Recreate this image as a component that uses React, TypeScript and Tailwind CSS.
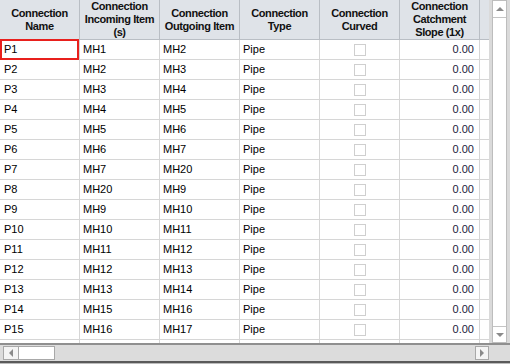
import { Fragment } from "react";

const columns = [
  ["Connection", "Name"],
  ["Connection", "Incoming Item", "(s)"],
  ["Connection", "Outgoing Item"],
  ["Connection", "Type"],
  ["Connection", "Curved"],
  ["Connection", "Catchment", "Slope (1x)"],
];

const rows = [
  ["P1", "MH1", "MH2"],
  ["P2", "MH2", "MH3"],
  ["P3", "MH3", "MH4"],
  ["P4", "MH4", "MH5"],
  ["P5", "MH5", "MH6"],
  ["P6", "MH6", "MH7"],
  ["P7", "MH7", "MH20"],
  ["P8", "MH20", "MH9"],
  ["P9", "MH9", "MH10"],
  ["P10", "MH10", "MH11"],
  ["P11", "MH11", "MH12"],
  ["P12", "MH12", "MH13"],
  ["P13", "MH13", "MH14"],
  ["P14", "MH15", "MH16"],
  ["P15", "MH16", "MH17"],
  ["P16", "MH17", "MH18"],
];

const cell = "h-5 border-r border-b border-[#d6d6d6] bg-white flex items-center";

function Arrow({ dir }: { dir: "up" | "down" | "left" | "right" }) {
  const pts = {
    up: "1,6 5,2 9,6",
    down: "1,2 5,6 9,2",
    left: "6,1 2,5 6,9",
    right: "2,1 6,5 2,9",
  }[dir];
  const size = dir === "up" || dir === "down" ? { w: 10, h: 8 } : { w: 8, h: 10 };
  return (
    <svg width={size.w} height={size.h} viewBox={`0 0 ${size.w} ${size.h}`}>
      <polygon points={pts} fill="#8a8a8a" />
    </svg>
  );
}

export default function App() {
  return (
    <div
      className="w-[510px] h-[364px] bg-[#e3e3e3] overflow-hidden text-[11px] text-black"
      style={{ fontFamily: '"Liberation Sans", Arial, sans-serif' }}
    >
      <div className="flex h-[343px]">
        <div className="w-[489px] h-[343px] overflow-hidden bg-white">
          <div className="grid grid-cols-[repeat(6,80px)_9px]">
            {columns.map((lines, i) => (
              <div
                key={i}
                className="h-10 border-r border-b border-[#b9bec4] bg-[#dfe3e8] flex flex-col items-center justify-center font-bold leading-[13px] tracking-[-0.4px] text-[#111]"
              >
                {lines.map((l) => (
                  <span key={l}>{l}</span>
                ))}
              </div>
            ))}
            <div className="h-10 border-b border-[#b9bec4] bg-[#dfe3e8]" />
            {rows.map(([name, inc, out], r) => (
              <Fragment key={name}>
                <div className={`${cell} pl-1 relative`}>
                  {name}
                  {r === 0 && (
                    <div className="absolute left-0 top-[-1px] w-[79px] h-[21px] border-2 border-[#e8201d]" />
                  )}
                </div>
                <div className={`${cell} pl-[3px]`}>{inc}</div>
                <div className={`${cell} pl-[3px]`}>{out}</div>
                <div className={`${cell} pl-[3px]`}>Pipe</div>
                <div className={`${cell} justify-center`}>
                  <div className="w-3 h-3 border border-[#cfcfcf] bg-white" />
                </div>
                <div className={`${cell} justify-end pr-[5px] text-[#1b1b3a]`}>0.00</div>
                <div className="h-5 border-b border-[#d6d6d6] bg-white" />
              </Fragment>
            ))}
          </div>
        </div>
        <div className="w-[21px] h-[343px] flex flex-col pl-[3px] pr-[3px] bg-[#dadada]">
          <div className="flex-1 flex flex-col border border-[#bdbdbd] bg-[#f0f0f0]">
            <div className="h-[17px] border-b border-[#c4c4c4] bg-white flex items-center justify-center">
              <Arrow dir="up" />
            </div>
            <div className="flex-1 bg-white" />
            <div className="h-[16px] border-t border-[#c4c4c4] bg-white flex items-center justify-center">
              <Arrow dir="down" />
            </div>
          </div>
        </div>
      </div>
      <div className="h-[18px] flex border-t-2 border-[#8f8f8f] bg-[#dcdcdc]">
        <div className="w-[489px] flex items-stretch pl-[3px] py-[1px]">
          <div className="w-4 border border-[#a8a8a8] bg-[#f4f4f4] flex items-center justify-center">
            <Arrow dir="left" />
          </div>
          <div className="w-9 border border-l-0 border-[#a8a8a8] bg-white" />
          <div className="flex-1" />
          <div className="w-[14px] border border-[#a8a8a8] bg-[#f4f4f4] flex items-center justify-center">
            <Arrow dir="right" />
          </div>
        </div>
        <div className="flex-1" />
      </div>
      <div className="h-[2px] bg-[#5a5a5a]" />
      <div className="h-[1px] bg-[#bcbcbc]" />
    </div>
  );
}
